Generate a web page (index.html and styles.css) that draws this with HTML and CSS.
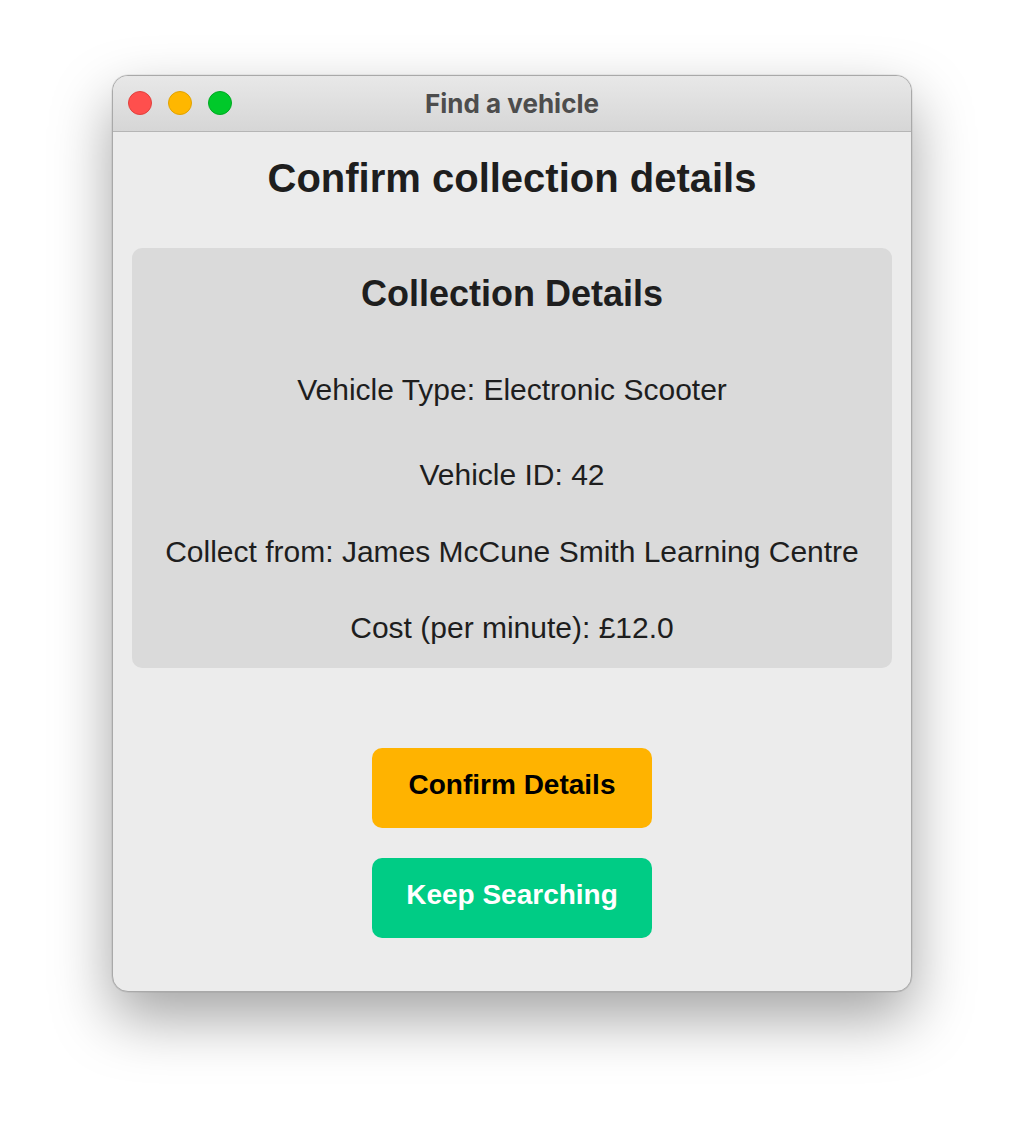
FILE: index.html
```html
<!DOCTYPE html>
<html>
<head>
<meta charset="utf-8">
<link rel="stylesheet" href="styles.css">
</head>
<body>
<div class="stage">
  <div class="window">
    <div class="titlebar">
      <div class="lights">
        <span class="light red"></span>
        <span class="light yellow"></span>
        <span class="light green"></span>
      </div>
      <div class="title">Find a vehicle</div>
    </div>
    <div class="content">
      <h1 class="heading">Confirm collection details</h1>
      <div class="card">
        <h2 class="card-title">Collection Details</h2>
        <p class="line first">Vehicle Type: Electronic Scooter</p>
        <p class="line">Vehicle ID: 42</p>
        <p class="line">Collect from: James McCune Smith Learning Centre</p>
        <p class="line">Cost (per minute): £12.0</p>
      </div>
      <div class="buttons">
        <button class="btn confirm">Confirm Details</button>
        <button class="btn keep">Keep Searching</button>
      </div>
    </div>
  </div>
</div>
</body>
</html>
```

FILE: styles.css
```css
html, body {
  margin: 0;
  padding: 0;
  background: #ffffff;
}
body {
  font-family: "Liberation Sans", Arial, sans-serif;
  color: #1e1e1e;
}
.stage {
  width: 1024px;
  height: 1140px;
  padding-top: 75px;
  padding-left: 112px;
  box-sizing: border-box;
}
.window {
  width: 800px;
  height: 917px;
  box-sizing: border-box;
  border-radius: 16px;
  background: #ececec;
  border: 1px solid #a9a9a9;
  box-shadow: 0 26px 60px rgba(0,0,0,0.36), 0 0 0 0.5px rgba(0,0,0,0.1);
  overflow: hidden;
  display: flex;
  flex-direction: column;
}
.titlebar {
  height: 55px;
  flex: none;
  background: linear-gradient(#e8e8e8, #d6d6d6);
  border-bottom: 1px solid #b5b5b5;
  position: relative;
  display: flex;
  align-items: center;
  justify-content: center;
}
.lights {
  position: absolute;
  left: 15px;
  top: 15px;
  display: flex;
  gap: 16px;
}
.light {
  width: 24px;
  height: 24px;
  border-radius: 50%;
  box-sizing: border-box;
}
.red { background: #ff4f4d; border: 1px solid #e0403d; }
.yellow { background: #ffb700; border: 1px solid #e0a200; }
.green { background: #00c92a; border: 1px solid #00a823; }
.title {
  font-family: "Inter", "Liberation Sans", sans-serif;
  font-weight: 700;
  font-size: 26px;
  color: #4d4d4d;
  margin-top: 0;
}
.content {
  flex: 1;
  display: flex;
  flex-direction: column;
  align-items: center;
  padding: 0 19px;
}
.heading {
  margin: 24px 0 0;
  font-size: 40px;
  line-height: 44px;
  font-weight: 700;
  color: #1e1e1e;
}
.card {
  margin-top: 48px;
  width: 100%;
  height: 420px;
  box-sizing: border-box;
  background: #dadada;
  border-radius: 10px;
  display: flex;
  flex-direction: column;
  align-items: center;
  padding-top: 26px;
}
.card-title {
  margin: 0;
  font-size: 36px;
  line-height: 40px;
  font-weight: 700;
}
.line {
  margin: 0;
  font-size: 30px;
  line-height: 32px;
  margin-top: 44px;
}
.line.first { margin-top: 60px; }
.line + .line { margin-top: 53px; }
.line + .line + .line { margin-top: 45px; }
.line + .line + .line + .line { margin-top: 44px; }
.buttons {
  margin-top: 80px;
  display: flex;
  flex-direction: column;
  gap: 30px;
}
.btn {
  width: 280px;
  height: 80px;
  border: none;
  border-radius: 10px;
  font-family: "Liberation Sans", Arial, sans-serif;
  font-weight: 700;
  font-size: 28px;
  padding: 0 0 6px;
}
.confirm { background: #ffb300; color: #000000; }
.keep { background: #00cc85; color: #ffffff; }
```
